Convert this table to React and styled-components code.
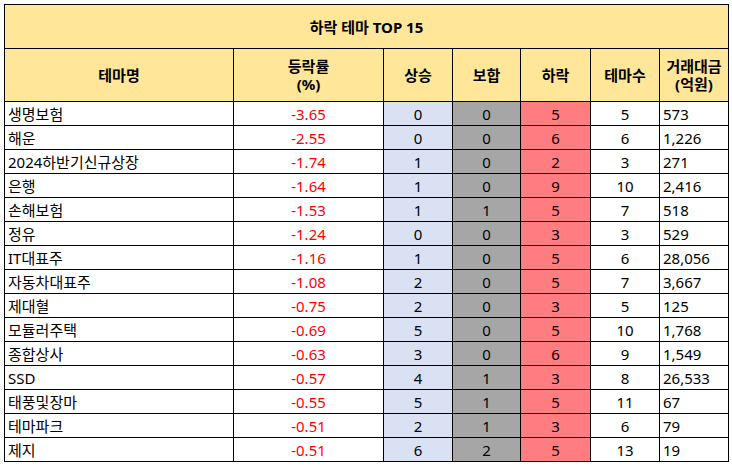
import React from "react";
import styled, { createGlobalStyle } from "styled-components";

const rows = [
  ["생명보험", "-3.65", 0, 0, 5, 5, "573"],
  ["해운", "-2.55", 0, 0, 6, 6, "1,226"],
  ["2024하반기신규상장", "-1.74", 1, 0, 2, 3, "271"],
  ["은행", "-1.64", 1, 0, 9, 10, "2,416"],
  ["손해보험", "-1.53", 1, 1, 5, 7, "518"],
  ["정유", "-1.24", 0, 0, 3, 3, "529"],
  ["IT대표주", "-1.16", 1, 0, 5, 6, "28,056"],
  ["자동차대표주", "-1.08", 2, 0, 5, 7, "3,667"],
  ["제대혈", "-0.75", 2, 0, 3, 5, "125"],
  ["모듈러주택", "-0.69", 5, 0, 5, 10, "1,768"],
  ["종합상사", "-0.63", 3, 0, 6, 9, "1,549"],
  ["SSD", "-0.57", 4, 1, 3, 8, "26,533"],
  ["태풍및장마", "-0.55", 5, 1, 5, 11, "67"],
  ["테마파크", "-0.51", 2, 1, 3, 6, "79"],
  ["제지", "-0.51", 6, 2, 5, 13, "19"],
];

const GlobalStyle = createGlobalStyle`
  body {
    margin: 0;
    background: #fff;
    font-family: "Noto Sans", "Noto Sans CJK KR", sans-serif;
    color: #000;
  }
`;

const Page = styled.div`
  padding: 4px 0 0 4px;
`;

const Grid = styled.div`
  display: grid;
  grid-template-columns: 228px 149px 68px 67px 69px 68px 68px;
  grid-template-rows: 43px 52px;
  grid-auto-rows: 23px;
  gap: 1px;
  padding: 1px;
  background: #000;
  width: max-content;
`;

const Title = styled.div`
  grid-column: 1 / -1;
  background: #ffe699;
  display: flex;
  align-items: center;
  justify-content: center;
  font-weight: 700;
  font-size: 15px;
`;

const Head = styled.div`
  background: #ffe699;
  display: flex;
  align-items: center;
  justify-content: center;
  text-align: center;
  font-weight: 700;
  font-size: 15px;
  line-height: 18px;
`;

const Cell = styled.div`
  background: ${(p) => p.$bg || "#fff"};
  color: ${(p) => p.$color || "#000"};
  display: flex;
  align-items: center;
  justify-content: ${(p) => (p.$left ? "flex-start" : "center")};
  padding: 0 3px;
  font-size: 15px;
  white-space: nowrap;
`;

const headers = [
  "테마명",
  <>등락률<br />(%)</>,
  "상승",
  "보합",
  "하락",
  "테마수",
  <>거래대금<br />(억원)</>,
];

export default function App() {
  return (
    <Page>
      <GlobalStyle />
      <Grid>
        <Title>하락 테마 TOP 15</Title>
        {headers.map((h, i) => (
          <Head key={i}>{h}</Head>
        ))}
        {rows.map((r) => (
          <React.Fragment key={r[0]}>
            <Cell $left>{r[0]}</Cell>
            <Cell $color="#ff0000">{r[1]}</Cell>
            <Cell $bg="#d9e1f2">{r[2]}</Cell>
            <Cell $bg="#a6a6a6">{r[3]}</Cell>
            <Cell $bg="#ff7c80">{r[4]}</Cell>
            <Cell>{r[5]}</Cell>
            <Cell $left>{r[6]}</Cell>
          </React.Fragment>
        ))}
      </Grid>
    </Page>
  );
}
